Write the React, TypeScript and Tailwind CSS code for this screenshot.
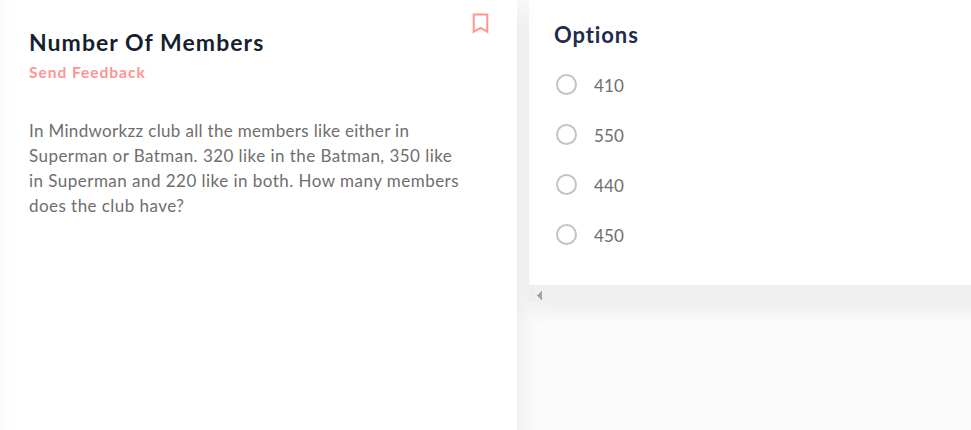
const question = [
  { text: 'In Mindworkzz club all the members like either in', spacing: 'tracking-[0.33px]' },
  { text: 'Superman or Batman. 320 like in the Batman, 350 like', spacing: 'tracking-[0.45px]' },
  { text: 'in Superman and 220 like in both. How many members', spacing: 'tracking-[0.47px]' },
  { text: 'does the club have?', spacing: 'tracking-[0.45px]' },
];

const options = ['410', '550', '440', '450'];

function Bookmark() {
  return (
    <svg width="17" height="21" viewBox="0 0 17 21" fill="none" stroke="#ff9495" strokeWidth="2">
      <path d="M1.7 1.5H15.3V18.7L8.5 14.8L1.7 18.7Z" />
    </svg>
  );
}

export default function App() {
  return (
    <div className="flex h-[430px] w-[971px] items-start gap-3 overflow-hidden bg-[#fbfbfb] font-['Lato',sans-serif]">
      <section className="relative flex h-[460px] w-[517px] shrink-0 justify-between bg-[linear-gradient(to_right,#fafafa,#ffffff_12px)] pl-[29px] pr-7 shadow-[0_6px_24px_rgba(0,0,0,0.09)]">
        <div className="pt-[27px]">
          <h1 className="h-[30px] whitespace-nowrap text-[23px] font-bold leading-[30px] tracking-[1.05px] text-[#161f2f]">Number Of Members</h1>
          <a className="mt-[5px] block h-5 whitespace-nowrap text-[15.5px] font-bold leading-5 tracking-[0.98px] text-[#ff9495]">Send Feedback</a>
          <p className="mt-[36px] text-[17px] leading-[25px] text-[#6e6e6e]">
            {question.map((line) => (
              <span key={line.text} className={`block whitespace-nowrap ${line.spacing}`}>{line.text}</span>
            ))}
          </p>
        </div>
        <button className="mt-[13px] h-[21px] w-[17px]" aria-label="Bookmark"><Bookmark /></button>
      </section>
      <section className="h-[302px] w-[600px] shrink-0 bg-white shadow-[0_9px_20px_rgba(0,0,0,0.06)]">
        <div className="h-[285px] pl-[25px] pt-[20px]">
          <h2 className="h-[30px] text-[22px] font-bold leading-[30px] tracking-[0.9px] text-[#202b4d]">Options</h2>
          <div className="mt-[10px]">
            {options.map((value) => (
              <label key={value} className="flex h-[50px] items-center">
                <span className="ml-0.5 mt-[-1px] size-[21px] rounded-full border-2 border-[#c4c4c4]" />
                <span className="ml-[17px] mt-px text-[17px] tracking-[0.2px] text-[#6e6e6e]">{value}</span>
              </label>
            ))}
          </div>
        </div>
        <div className="flex h-[17px] items-center bg-[#f0f0f0] pl-2">
          <svg width="5" height="9" viewBox="0 0 5 9" fill="#a3a3a3" className="mt-1" shapeRendering="crispEdges"><path d="M5 0V9L0 4.5Z" /></svg>
        </div>
      </section>
    </div>
  );
}
